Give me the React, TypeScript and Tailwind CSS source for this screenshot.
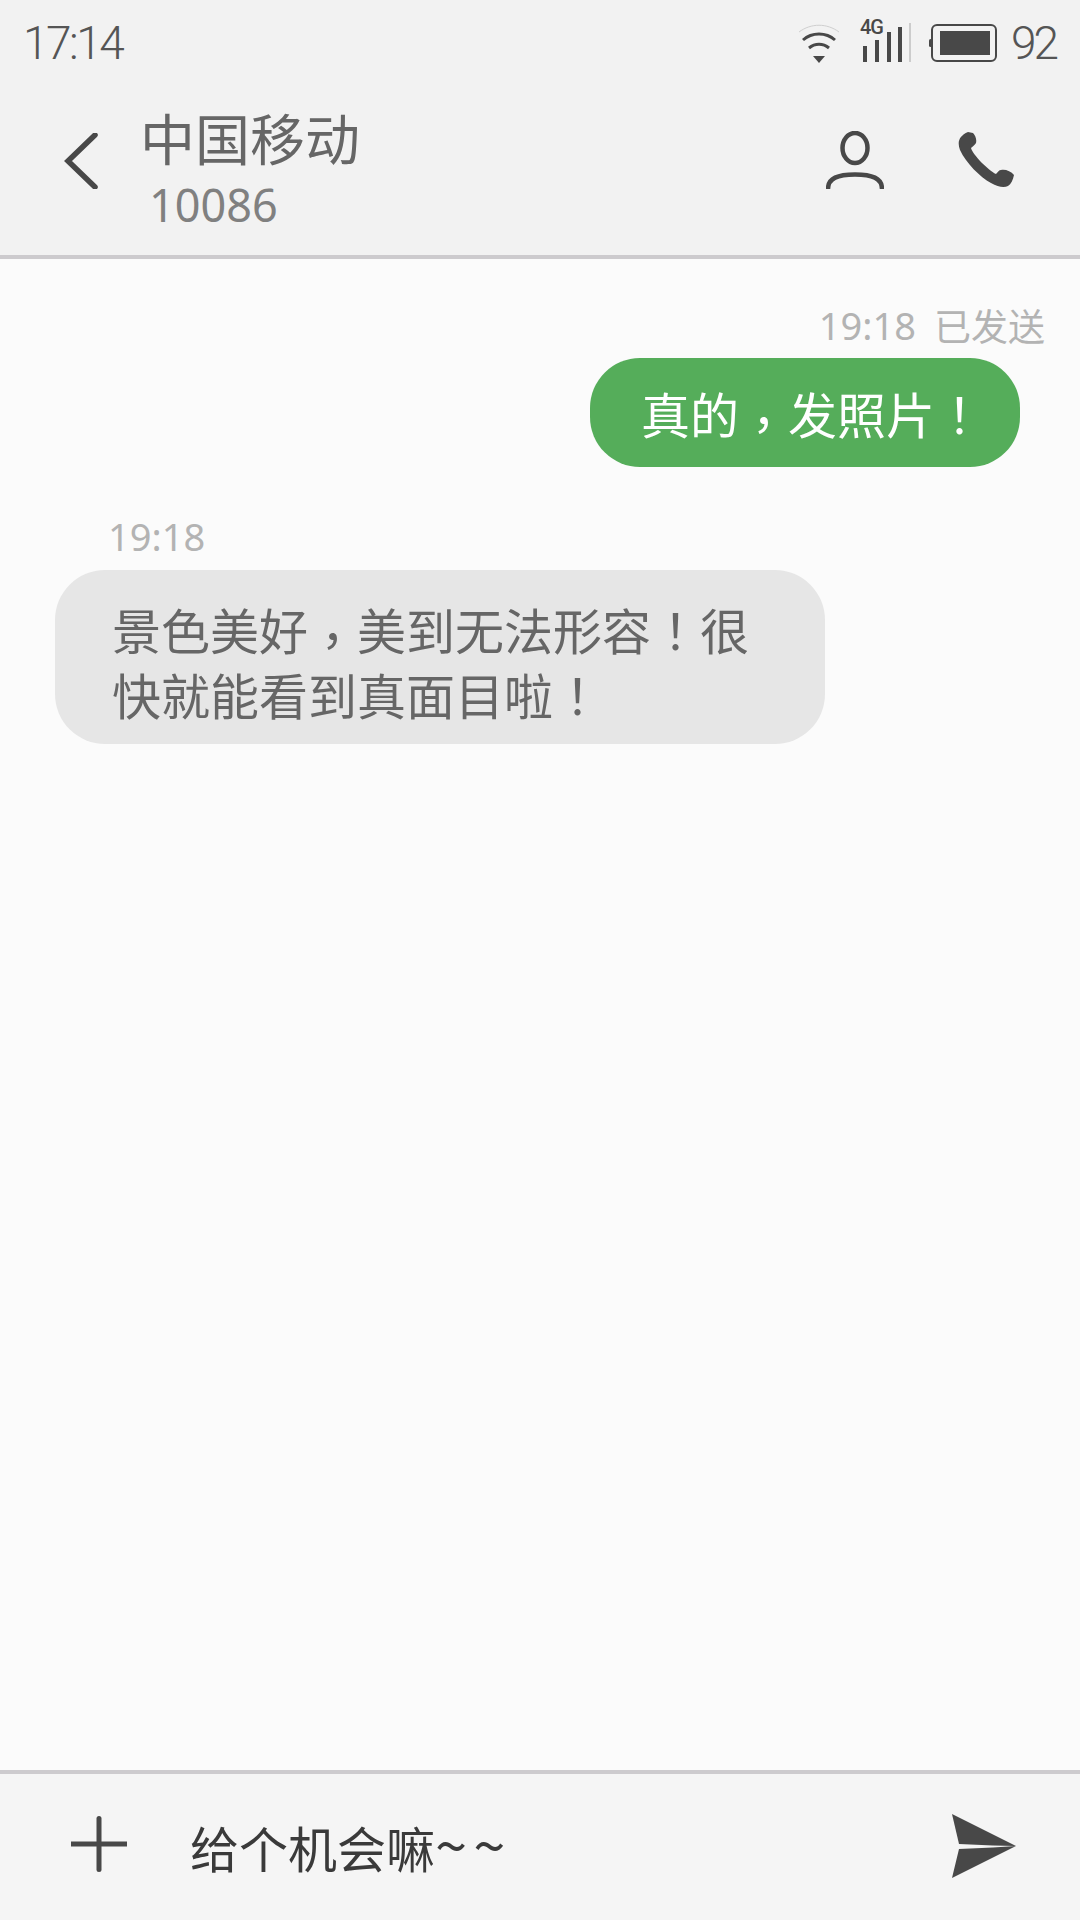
const cjk = "font-['Noto_Sans_CJK_SC','Noto_Sans',sans-serif]";
const latin = "font-['Noto_Sans',sans-serif]";
const centered = "font-['Noto_Sans_CJK_TC',sans-serif]";
const lowComma = "inline-block translate-y-[9px] font-['Noto_Sans_CJK_TC',sans-serif]";

function WifiIcon() {
  return (
    <svg width="44" height="44" viewBox="0 0 44 44" fill="none" className="mr-[18px]">
      <path d="M2 11C14 2 30 2 42 11" stroke="#cfcfcf" strokeWidth="1" />
      <path d="M6 19C15 11 29 11 38 19" stroke="#484848" strokeWidth="3" />
      <path d="M12 27C18 22 26 22 32 27" stroke="#484848" strokeWidth="3" />
      <path d="M16 35H28L22 42Z" fill="#484848" />
    </svg>
  );
}

function SignalIcon() {
  return (
    <div className="relative mr-[18px] h-[46px] w-[52px]">
      <span className="absolute left-[1px] top-[-4px] font-['Roboto',sans-serif] text-[20px] font-medium leading-[22px] tracking-[-1px] text-[#484848]">4G</span>
      <svg width="52" height="46" viewBox="0 0 52 46" className="absolute left-0 top-0">
        <rect x="4" y="26" width="4" height="16" fill="#484848" />
        <rect x="16" y="20" width="4" height="22" fill="#484848" />
        <rect x="28" y="12" width="4" height="30" fill="#484848" />
        <rect x="39" y="7" width="4" height="35" fill="#484848" />
        <rect x="50" y="3" width="2" height="39" fill="#cccccc" />
      </svg>
    </div>
  );
}

function BatteryIcon() {
  return (
    <svg width="68" height="38" viewBox="0 0 68 38" fill="none" className="mr-[14px]">
      <rect x="3" y="1" width="64" height="36" rx="5" stroke="#484848" strokeWidth="2" />
      <rect x="0" y="15" width="3" height="8" rx="1.5" fill="#484848" />
      <rect x="11" y="7" width="50" height="24" fill="#484848" />
    </svg>
  );
}

function PersonIcon() {
  return (
    <svg width="58" height="58" viewBox="0 0 58 58" fill="none">
      <ellipse cx="29" cy="17" rx="12.5" ry="15" stroke="#484848" strokeWidth="4.5" />
      <path d="M2 58C2 47 12 43.5 29 43.5C46 43.5 56 47 56 58" stroke="#484848" strokeWidth="4.5" />
    </svg>
  );
}

function PhoneIcon() {
  return (
    <svg width="56" height="56" viewBox="0 0 56 56">
      <path
        d="M10 0L15 1C17 3 19 7 18 11C17 13 15 14 13 16C15 23 30 38 38 42C40 40 41 38 43 38C47 37 53 39 56 43C55 48 53 52 50 54C46 56 40 55 33 51C22 45 8 31 2 18C-1 10 1 4 10 0Z"
        fill="#484848"
      />
    </svg>
  );
}

function SendIcon() {
  return (
    <svg width="64" height="64" viewBox="0 0 64 64" className="mb-[3px]">
      <path d="M0 0L64 32L41 31.5L7 30Z" fill="#484848" />
      <path d="M0 64L64 32L41 33.5L7 35Z" fill="#484848" />
    </svg>
  );
}

export default function App() {
  return (
    <div className={`flex h-[1920px] w-[1080px] flex-col bg-[#fbfbfb] ${cjk}`}>
      <header className="h-[259px] shrink-0 border-b-4 border-[#cdcbce] bg-[#f2f2f2]">
        <div className="flex h-[86px] items-center justify-between pl-[23px] pr-[24px]">
          <span className="font-['Roboto',sans-serif] text-[46px] font-light tracking-[-2.5px] text-[#555555]">17:14</span>
          <div className="flex items-center">
            <WifiIcon />
            <SignalIcon />
            <BatteryIcon />
            <span className="font-['Roboto',sans-serif] text-[46px] font-light tracking-[-3px] text-[#555555]">92</span>
          </div>
        </div>
        <div className="mt-[13px] flex items-center pl-[64px] pr-[66px]">
          <svg width="34" height="56" viewBox="0 0 34 56" fill="none" className="mb-[4px] mr-[42px]">
            <path d="M31 2L4 28L31 54" stroke="#484848" strokeWidth="5.5" strokeLinecap="round" />
          </svg>
          <div className="flex flex-1 flex-col">
            <span className="text-[55px] leading-[74px] text-[#666666]">中国移动</span>
            <span className={`ml-[9px] mt-[9px] text-[45px] leading-[45px] text-[#808080] ${latin}`}>10086</span>
          </div>
          <div className="mb-[6px] flex items-center gap-[74px]">
            <PersonIcon />
            <PhoneIcon />
          </div>
        </div>
      </header>

      <main className="flex flex-1 flex-col">
        <div className="flex items-center justify-end gap-[18px] pr-[35px] pt-[39px] text-[37px] leading-[54px] text-[#b3b3b3]">
          <span className={`text-[38px] ${latin}`}>19:18</span>
          <span>已发送</span>
        </div>
        <div className="mt-[6px] flex justify-end pr-[60px]">
          <div className="flex h-[109px] w-[430px] items-center rounded-[50px] bg-[#55ad5a] pl-[51px] text-[49px] text-white">
            真的<span className={lowComma}>，</span>发照片<span className={centered}>！</span>
          </div>
        </div>
        <span className={`ml-[108px] mt-[42px] text-[38px] leading-[54px] text-[#b3b3b3] ${latin}`}>19:18</span>
        <div className="ml-[55px] mt-[7px] h-[174px] w-[770px] rounded-[50px] bg-[#e6e6e6] pl-[57px] pr-[40px] pt-[26px] text-[49px] leading-[65px] text-[#666666]">
          景色美好<span className={lowComma}>，</span>美到无法形容<span className={centered}>！</span>很
          <br />
          快就能看到真面目啦<span className={centered}>！</span>
        </div>
      </main>

      <footer className="flex h-[150px] shrink-0 items-center border-t-4 border-[#cdcbce] bg-[#f5f5f5] pl-[71px] pr-[64px]">
        <svg width="56" height="56" viewBox="0 0 56 56" className="mb-[6px] mr-[63px]">
          <rect x="0" y="25.5" width="56" height="5" fill="#484848" />
          <rect x="25.5" y="0" width="5" height="56" rx="2.5" fill="#484848" />
        </svg>
        <span className="flex-1 text-[49px] leading-[72px] text-[#3a3a3a]">
          给个机会嘛<span className="text-[58px] leading-none tracking-[6px]">~~</span>
        </span>
        <SendIcon />
      </footer>
    </div>
  );
}
